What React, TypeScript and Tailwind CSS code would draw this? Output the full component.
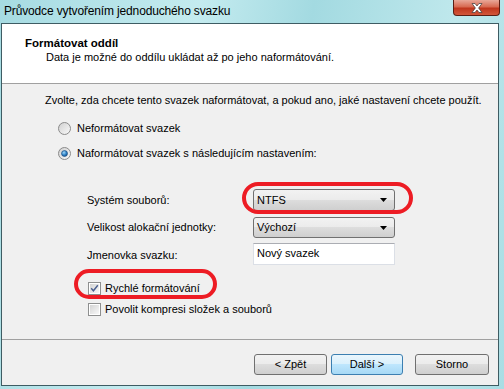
import React from "react";

const font = { fontFamily: '"Liberation Sans", Arial, sans-serif' };

function Radio({ checked }: { checked?: boolean }) {
  return (
    <svg width="13" height="13" viewBox="0 0 13 13" className="shrink-0">
      <defs>
        <linearGradient id={checked ? "rg1" : "rg0"} x1="0" y1="0" x2="1" y2="1">
          <stop offset="0" stopColor="#cfcfcf" />
          <stop offset="1" stopColor="#fbfbfb" />
        </linearGradient>
        <radialGradient id="dot" cx="0.4" cy="0.35" r="0.7">
          <stop offset="0" stopColor="#9fd7f8" />
          <stop offset="0.6" stopColor="#2b7ec3" />
          <stop offset="1" stopColor="#164f8c" />
        </radialGradient>
      </defs>
      <circle cx="6.5" cy="6.5" r="6" fill={`url(#${checked ? "rg1" : "rg0"})`} stroke="#8b8b8b" strokeWidth="1" />
      {checked && <circle cx="6.5" cy="6.5" r="3" fill="url(#dot)" stroke="#1c4a7a" strokeWidth="0.6" />}
    </svg>
  );
}

function Check({ checked }: { checked?: boolean }) {
  return (
    <svg width="13" height="13" viewBox="0 0 13 13" className="shrink-0">
      <defs>
        <linearGradient id="cb" x1="0" y1="0" x2="1" y2="1">
          <stop offset="0" stopColor="#d4d4d4" />
          <stop offset="1" stopColor="#f8f8f8" />
        </linearGradient>
      </defs>
      <rect x="0.5" y="0.5" width="12" height="12" fill="#fff" stroke="#8e8f8f" />
      <rect x="2" y="2" width="9" height="9" fill="url(#cb)" />
      {checked && (
        <path d="M3.2 6.3 L5.4 8.8 L9.8 3.2" fill="none" stroke="#4a5f8f" strokeWidth="1.4" />
      )}
    </svg>
  );
}

function Combo({ value }: { value: string }) {
  return (
    <div className="w-[142px] h-full rounded-[3px] border border-[#707070] bg-[linear-gradient(#f2f2f2,#ebebeb_50%,#dddddd_50%,#cfcfcf)] flex items-center pl-[3px] pr-[7px] justify-between">
      <span className="text-[11px] text-black leading-none">{value}</span>
      <svg width="7" height="4" viewBox="0 0 7 4">
        <path d="M0 0 H7 L3.5 4 Z" fill="#000" />
      </svg>
    </div>
  );
}

function Btn({ label, focused }: { label: string; focused?: boolean }) {
  return (
    <div
      className={
        "h-[21px] rounded-[3px] border flex items-center justify-center text-[11px] text-black " +
        (focused
          ? "border-[#3c7fb1] bg-[linear-gradient(#eaf6fd,#d9f0fc_50%,#bee6fd_50%,#a7d9f5)]"
          : "border-[#707070] bg-[linear-gradient(#f2f2f2,#ebebeb_50%,#dddddd_50%,#cfcfcf)]")
      }
    >
      {label}
    </div>
  );
}

export default function App() {
  return (
    <div
      style={font}
      className="relative w-[504px] h-[389px] overflow-hidden flex flex-col bg-[linear-gradient(100deg,#a6dbe2,#c4ebef_35%,#a3dae1_55%,#bfe8ec_80%,#a9dde4)]"
    >
      {/* title bar */}
      <div className="h-[23px] flex items-start justify-between pl-[4px] pr-[4px]">
        <span className="text-[12px] text-black mt-[4px] leading-[15px] tracking-[-0.15px]">Průvodce vytvořením jednoduchého svazku</span>
        <div className="w-[47px] h-[16px] rounded-b-[4px] border border-t-0 border-[#5a1e14] bg-[linear-gradient(#e9a899,#d86a52_45%,#c0361d_55%,#d2573b)] flex items-center justify-center">
          <svg width="12" height="10" viewBox="0 0 12 10">
            <path d="M1 0.5 L4 0.5 L6 3 L8 0.5 L11 0.5 L7.6 5 L11 9.5 L8 9.5 L6 7 L4 9.5 L1 9.5 L4.4 5 Z" fill="#ffffff" stroke="#3a3a3a" strokeWidth="0.7" />
          </svg>
        </div>
      </div>

      {/* client */}
      <div className="ml-[1px] w-[498px] h-[363px] border border-[#3e5c63] bg-[#f0f0f0] flex flex-col text-black">
        {/* header */}
        <div className="h-[60px] bg-white border-b border-[#a0a0a0] pt-[12px]">
          <div className="pl-[23px] text-[11.5px] font-bold leading-[14px]">Formátovat oddíl</div>
          <div className="pl-[44px] text-[11px] leading-[14px]">Data je možné do oddílu ukládat až po jeho naformátování.</div>
        </div>

        {/* body */}
        <div className="flex-1 flex flex-col text-[11px]">
          <div className="pl-[43px] mt-[9px] h-[15px] leading-[15px] whitespace-nowrap">
            Zvolte, zda chcete tento svazek naformátovat, a pokud ano, jaké nastavení chcete použít.
          </div>
          <div className="pl-[56px] mt-[12px] flex flex-col gap-[9px]">
            <div className="h-[16px] flex items-center gap-[6px]">
              <Radio />
              <span>Neformátovat svazek</span>
            </div>
            <div className="h-[16px] flex items-center gap-[6px]">
              <Radio checked />
              <span>Naformátovat svazek s následujícím nastavením:</span>
            </div>
          </div>

          <div className="pl-[85px] mt-[28px] flex flex-col">
            <div className="flex items-center h-[22px]">
              <span className="w-[166px]">Systém souborů:</span>
              <Combo value="NTFS" />
            </div>
            <div className="flex items-center h-[21px] mt-[6px]">
              <span className="w-[166px]">Velikost alokační jednotky:</span>
              <Combo value="Výchozí" />
            </div>
            <div className="flex items-center h-[22px] mt-[5px]">
              <span className="w-[166px] pt-[3px]">Jmenovka svazku:</span>
              <div className="w-[142px] h-[22px] bg-white border border-[#dbdfe6] border-t-[#abadb3] flex items-start pl-[3px] pt-[3px] leading-[13px]">
                Nový svazek
              </div>
            </div>
          </div>

          <div className="pl-[86px] mt-[15px] flex flex-col gap-[5px]">
            <div className="h-[16px] flex items-center gap-[4px]">
              <Check checked />
              <span>Rychlé formátování</span>
            </div>
            <div className="h-[16px] flex items-center gap-[4px]">
              <Check />
              <span>Povolit kompresi složek a souborů</span>
            </div>
          </div>
        </div>

        {/* footer */}
        <div className="h-[46px] border-t border-[#a0a0a0] flex justify-end items-start pt-[14px] pr-[9px]">
          <div className="w-[73px]"><Btn label="< Zpět" /></div>
          <div className="w-[72px] ml-[4px]"><Btn label="Další >" focused /></div>
          <div className="w-[74px] ml-[12px]"><Btn label="Storno" /></div>
        </div>
      </div>

      {/* red annotation ellipses */}
      <div className="absolute left-[242px] top-[182px] w-[171px] h-[32px] rounded-[16px] border-[4px] border-[#ed1c24]" />
      <div className="absolute left-[74px] top-[269px] w-[143px] h-[30px] rounded-[15px] border-[4px] border-[#ed1c24]" />
    </div>
  );
}
